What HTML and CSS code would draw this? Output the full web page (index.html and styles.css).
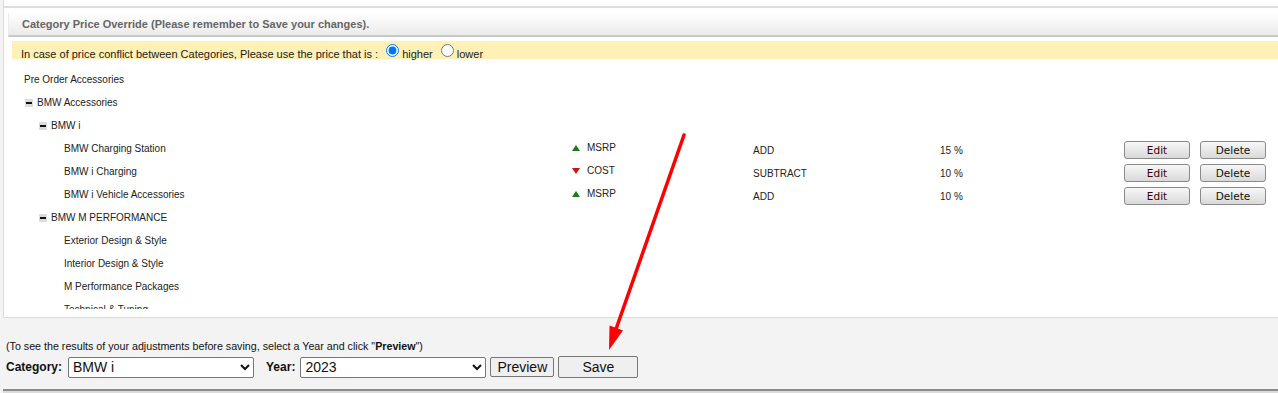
FILE: index.html
```html
<!DOCTYPE html>
<html lang="en">
<head>
  <meta charset="UTF-8">
  <title>Category Price Override</title>
  <link rel="stylesheet" href="styles.css">
</head>
<body>
  <div class="panel">
    <div class="top-line"></div>
    <div class="box">
      <div class="box-header">Category Price Override (Please remember to Save your changes).</div>
      <div class="conflict-bar">
        In case of price conflict between Categories, Please use the price that is :
        <label><input type="radio" name="conflict" checked>higher</label>
        <label><input type="radio" name="conflict">lower</label>
      </div>
      <div class="tree">
        <div class="row">Pre Order Accessories</div>
        <div class="row"><span class="toggle"></span>BMW Accessories</div>
        <div class="row lvl1"><span class="toggle"></span>BMW i</div>
        <div class="row item">
          <span class="name">BMW Charging Station</span>
          <span class="basis"><span class="tri up"></span>MSRP</span>
          <span class="op">ADD</span>
          <span class="amt">15 %</span>
          <span class="actions"><button class="btn edit">Edit</button><button class="btn">Delete</button></span>
        </div>
        <div class="row item">
          <span class="name">BMW i Charging</span>
          <span class="basis"><span class="tri down"></span>COST</span>
          <span class="op">SUBTRACT</span>
          <span class="amt">10 %</span>
          <span class="actions"><button class="btn edit">Edit</button><button class="btn">Delete</button></span>
        </div>
        <div class="row item">
          <span class="name">BMW i Vehicle Accessories</span>
          <span class="basis"><span class="tri up"></span>MSRP</span>
          <span class="op">ADD</span>
          <span class="amt">10 %</span>
          <span class="actions"><button class="btn edit">Edit</button><button class="btn">Delete</button></span>
        </div>
        <div class="row lvl1"><span class="toggle"></span>BMW M PERFORMANCE</div>
        <div class="row item"><span class="name">Exterior Design &amp; Style</span></div>
        <div class="row item"><span class="name">Interior Design &amp; Style</span></div>
        <div class="row item"><span class="name">M Performance Packages</span></div>
        <div class="row item"><span class="name">Technical &amp; Tuning</span></div>
      </div>
    </div>
  </div>

  <div class="bottom">
    <p class="hint">(To see the results of your adjustments before saving, select a Year and click "<b>Preview</b>")</p>
    <div class="controls">
      <label class="ctl-label">Category:</label>
      <select class="sel">
        <option>BMW i</option>
      </select>
      <label class="ctl-label year">Year:</label>
      <select class="sel">
        <option>2023</option>
      </select>
      <button class="plain preview">Preview</button>
      <button class="plain save">Save</button>
    </div>
  </div>
  <div class="footer-line"></div>

  <!-- annotation arrow -->
  <svg class="arrow" width="1278" height="393" viewBox="0 0 1278 393">
    <line x1="684" y1="135" x2="615" y2="332" stroke="#ff0000" stroke-width="3.5" stroke-linecap="round"/>
    <polygon points="609,350 609.5,325.5 623,330.5" fill="#ff0000"/>
  </svg>
</body>
</html>
```

FILE: styles.css
```css
body {
  margin: 0;
  background: #f3f3f3;
  font-family: "Liberation Sans", Arial, sans-serif;
  color: #222;
  overflow: hidden;
}
.panel {
  margin-left: 3px;
  background: white;
  border-left: 1px solid #dcdcdc;
  border-bottom: 1px solid #dcdcdc;
  padding-bottom: 8px;
}
.top-line {
  height: 6px;
  border-bottom: 2px solid #dedede;
}
.box {
  margin: 5px 0 0 4px;
}
.box-header {
  height: 22px;
  line-height: 23px;
  padding-left: 13px;
  font-size: 11px;
  font-weight: bold;
  color: #666;
  background: linear-gradient(#ffffff, #ebebeb);
  border-left: 1px solid #ececec;
  border-bottom: 2px solid #c8c8c8;
}
.conflict-bar {
  margin: 4px 0 0 4px;
  height: 15px;
  padding: 3px 0 0 9px;
  line-height: 18px;
  background: #fff0b5;
  font-size: 11px;
  color: #222;
}
.conflict-bar input {
  margin: 0 3px 0 5px;
  vertical-align: 1px;
}
.tree {
  height: 241px;
  padding: 9px 0 0 16px;
  overflow: hidden;
  font-size: 10px;
  color: #222;
}
.row {
  height: 23px;
  line-height: 14px;
  display: flex;
  align-items: center;
}
.row.lvl1 {
  padding-left: 14px;
}
.toggle {
  width: 8px;
  height: 8px;
  margin: 0 4px 0 1px;
  background: #dcdcdc;
  position: relative;
}
.toggle::after {
  content: "";
  position: absolute;
  left: 1px;
  top: 3px;
  width: 6px;
  height: 2px;
  background: #111;
}
.row.item {
  display: grid;
  grid-template-columns: 548px 181px 187px 184px auto;
  align-items: center;
}
.item .name {
  padding-left: 40px;
}
.basis {
  display: flex;
  align-items: center;
  margin-bottom: 2px;
}
.tri {
  width: 0;
  height: 0;
  margin-right: 7px;
  border-left: 4px solid transparent;
  border-right: 4px solid transparent;
}
.tri.up {
  border-bottom: 6px solid #1c7a1c;
}
.tri.down {
  border-top: 6px solid #c81414;
}
.op, .amt {
  margin-top: 4px;
}
.actions {
  display: flex;
  gap: 10px;
  margin-top: 2px;
}
.btn {
  width: 66px;
  height: 18px;
  padding: 0;
  font-family: "DejaVu Sans", Verdana, sans-serif;
  font-size: 10.5px;
  color: #111;
  background: linear-gradient(#f7f7f7, #d9d9d9);
  border: 1px solid #8a8a8a;
  border-radius: 3px;
}
.btn.edit {
  color: #3f0000;
}
.bottom {
  padding-left: 6px;
}
.hint {
  margin: 21px 0 0;
  font-size: 10.7px;
  line-height: 14px;
  color: #111;
}
.controls {
  margin-top: 3px;
  height: 22px;
  display: flex;
  align-items: center;
}
.ctl-label {
  font-size: 12px;
  font-weight: bold;
  color: #111;
  margin-right: 6px;
}
.ctl-label.year {
  margin-left: 12px;
  margin-right: 5px;
}
.sel {
  width: 186px;
  height: 21px;
  font-family: "Liberation Sans", Arial, sans-serif;
  font-size: 14px;
  color: #111;
  background: white;
  border: 1px solid #767676;
  border-radius: 2px;
}
.plain {
  height: 20px;
  margin-left: 4px;
  font-family: "Liberation Sans", Arial, sans-serif;
  font-size: 14px;
  color: #111;
  background: #efefef;
  border: 1px solid #767676;
  border-radius: 2px;
}
.preview {
  width: 64px;
}
.save {
  width: 80px;
  height: 22px;
}
.footer-line {
  margin: 11px 0 0 3px;
  border-top: 2px solid #8c8c8c;
  border-bottom: 2px solid #dcdcdc;
}
.arrow {
  position: absolute;
  left: 0;
  top: 0;
  pointer-events: none;
}
```
